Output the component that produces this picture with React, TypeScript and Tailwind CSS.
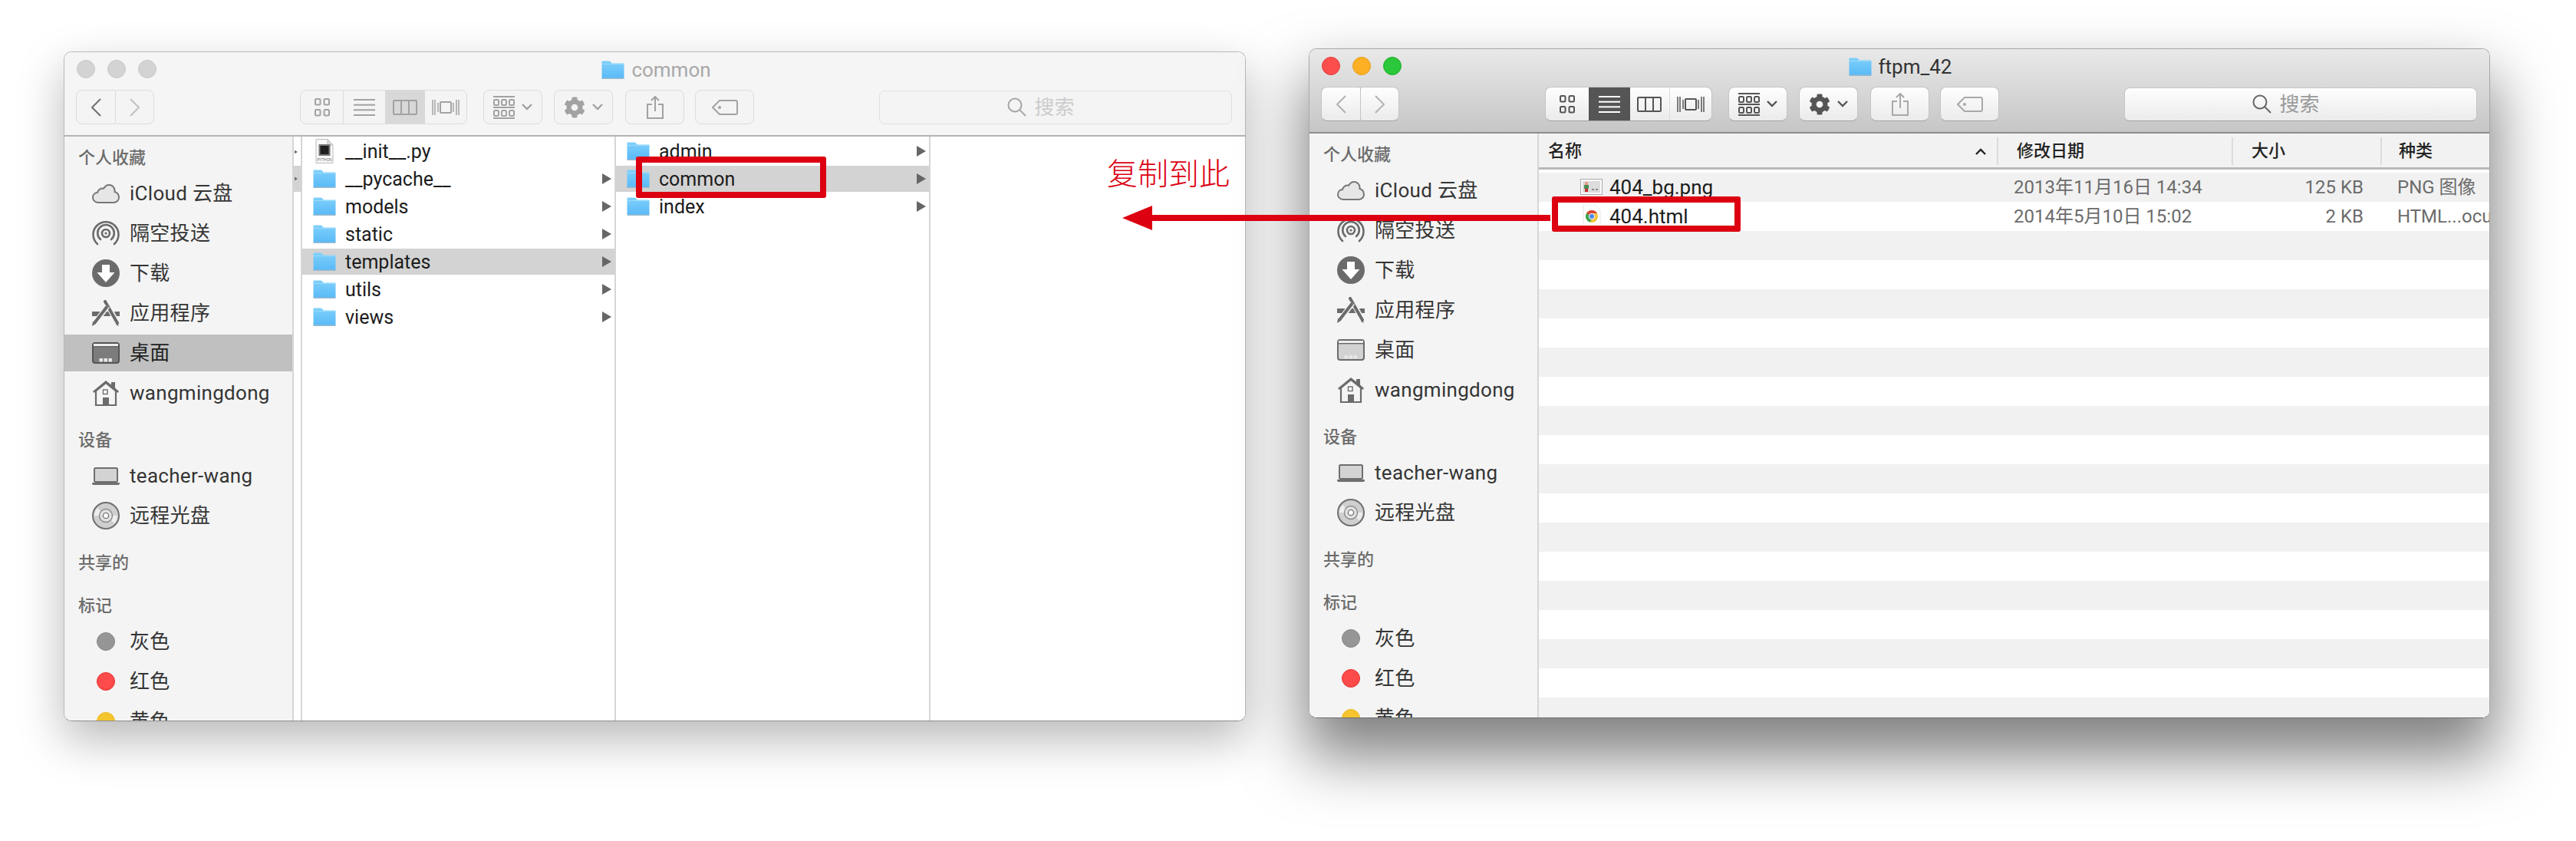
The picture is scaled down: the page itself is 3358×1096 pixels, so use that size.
import React from "react";
import { FaCog } from "react-icons/fa";

const Folder = ({ w = 30, h = 24 }: { w?: number; h?: number }) => (
  <svg width={w} height={h} viewBox="0 0 30 24" className="shrink-0">
    <defs>
      <linearGradient id="fg" x1="0" y1="0" x2="0" y2="1">
        <stop offset="0" stopColor="#7fd0fb" />
        <stop offset="1" stopColor="#58b9f7" />
      </linearGradient>
    </defs>
    <path d="M0.5 1.5 Q0.5 0.5 1.5 0.5 H10 Q11.5 0.5 12.5 2 L13.5 3.5 H28.5 Q29.5 3.5 29.5 4.5 V22.5 Q29.5 23.5 28.5 23.5 H1.5 Q0.5 23.5 0.5 22.5 Z" fill="url(#fg)" />
    <rect x="0.5" y="22.5" width="29" height="1.5" fill="#9ab9cd" />
    <rect x="0.5" y="4" width="29" height="1" fill="#9bdcfc" />
  </svg>
);

const Cloud = () => (
  <svg width="36" height="25" viewBox="0 0 36 25">
    <path d="M8 24C3.5 24 1 20.5 1 17.5 1 13.5 4 11.2 7 11 8 7 11.5 5 15 5.8 17 2.5 19.5 1 22 1 27 1 30 5 29.5 10 33 11 35 14 35 17.5 35 21 32 24 28 24Z" fill="#e6e6e6" stroke="#777" strokeWidth="2" />
  </svg>
);
const AirDrop = () => (
  <svg width="36" height="34" viewBox="0 0 36 34" fill="none" stroke="#6b6b6b" strokeWidth="2.6" strokeLinecap="round">
    <path d="M7 31A16.5 16.5 0 1 1 29 31" />
    <path d="M11 25A10.8 10.8 0 1 1 25 25" />
    <circle cx="18" cy="17" r="5" />
    <circle cx="18" cy="17" r="1.6" fill="#6b6b6b" stroke="none" />
  </svg>
);
const Download = () => (
  <svg width="36" height="36" viewBox="0 0 36 36">
    <circle cx="18" cy="18" r="18" fill="#6b6b6b" />
    <path d="M13 7H23V17H29.5L18 30 6.5 17H13Z" fill="#fff" />
  </svg>
);
const Apps = () => (
  <svg width="36" height="34" viewBox="0 0 36 34">
    <path d="M0 15H36V21H0Z" fill="#6b6b6b" />
    <path d="M18 1 33 31" stroke="#f4f4f4" strokeWidth="7" />
    <path d="M17 2 33 30" stroke="#6b6b6b" strokeWidth="4" strokeLinecap="round" />
    <path d="M33 30 35 34 31 32Z" fill="#6b6b6b" />
    <path d="M20 8 3 31" stroke="#f4f4f4" strokeWidth="7" />
    <path d="M20 8 3 30" stroke="#6b6b6b" strokeWidth="4" />
    <path d="M1 28 5 31 0 34Z" fill="#6b6b6b" />
  </svg>
);
const Desk = ({ sel }: { sel: boolean }) => (
  <svg width="36" height="28" viewBox="0 0 36 28">
    <rect x="1" y="1" width="34" height="26" rx="3" fill={sel ? "#7c7c7c" : "#d2d2d2"} stroke={sel ? "#555" : "#6b6b6b"} strokeWidth="2" />
    <rect x="2" y="2" width="32" height="3" fill="#eeeeee" />
    <rect x="2" y="5" width="32" height="1.4" fill="#666" />
    <rect x="9.5" y="21" width="4.5" height="4.5" fill="#e6e6e6" />
    <rect x="15.5" y="21" width="4.5" height="4.5" fill="#e6e6e6" />
    <rect x="21.5" y="21" width="4.5" height="4.5" fill="#e6e6e6" />
  </svg>
);
const Home = () => (
  <svg width="36" height="34" viewBox="0 0 36 34">
    <path d="M1 15 18 1 25 6.5V3H30V10.5L35 15 33.5 17 18 4.5 2.5 17Z" fill="#6b6b6b" />
    <path d="M5 14.5V33H31V14.5L18 4Z" fill="#f4f4f4" stroke="#6b6b6b" strokeWidth="2.2" />
    <rect x="14.5" y="13" width="5.5" height="5.5" fill="#fff" stroke="#6b6b6b" strokeWidth="1.4" />
    <rect x="14" y="23" width="8" height="10" fill="#6b6b6b" />
  </svg>
);
const Laptop = () => (
  <svg width="36" height="23" viewBox="0 0 36 23">
    <rect x="3" y="1" width="30" height="18" rx="1.5" fill="#d3d3d3" stroke="#6f6f6f" strokeWidth="2" />
    <path d="M0 20H36V21Q36 23 34 23H2Q0 23 0 21Z" fill="#6f6f6f" />
  </svg>
);
const Disc = () => (
  <svg width="36" height="36" viewBox="0 0 36 36">
    <circle cx="18" cy="18" r="17" fill="#cfcfcf" stroke="#707070" strokeWidth="2" />
    <path d="M7 8 13 14A7 7 0 0 0 11.5 18L3 18A15 15 0 0 1 7 8Z" fill="#eeeeee" />
    <path d="M29 28 23 22A7 7 0 0 0 24.5 18L33 18A15 15 0 0 1 29 28Z" fill="#eeeeee" />
    <circle cx="18" cy="18" r="8.5" fill="#e2e2e2" stroke="#8a8a8a" strokeWidth="1.4" />
    <circle cx="18" cy="18" r="3.6" fill="#fff" stroke="#777" strokeWidth="1.4" />
  </svg>
);
const Py = () => (
  <svg width="24" height="32" viewBox="0 0 24 32" className="shrink-0">
    <path d="M1 .5H16L23 8V31.5H1Z" fill="#f8f8f8" stroke="#bbb" />
    <path d="M16 .5V8H23Z" fill="#ddd" stroke="#bbb" />
    <rect x="4.5" y="7" width="15" height="15" fill="#777" />
    <rect x="6.5" y="9" width="11" height="11" fill="#1f1f1f" />
    <text x="12" y="29" fontSize="4.6" textAnchor="middle" fill="#666" fontFamily="Liberation Sans">PYTHON</text>
  </svg>
);
const Png = () => (
  <svg width="29" height="22" viewBox="0 0 29 22" className="shrink-0">
    <rect x="0.5" y="0.5" width="28" height="20" fill="#fbfbfb" stroke="#aaa" />
    <rect x="3" y="3" width="23" height="15" fill="#dcdcdc" />
    <rect x="6" y="4" width="4" height="4" fill="#e8a08a" />
    <rect x="5" y="8" width="6" height="5" fill="#4c8a50" />
    <rect x="6" y="13" width="4" height="4" fill="#c62b2b" />
    <rect x="15" y="13" width="3" height="2" fill="#888" />
    <rect x="20" y="13" width="3" height="2" fill="#888" />
  </svg>
);
const ChromeDoc = () => (
  <svg width="24" height="30" viewBox="0 0 24 30" className="shrink-0">
    <path d="M1 0H16L23 7V30H1Z" fill="#fff" stroke="#e6e6e6" />
    <circle cx="12" cy="15" r="8" fill="#f2c53a" />
    <path d="M12 7A8 8 0 0 1 19 11H12A4 4 0 0 0 8.4 13.2L5.2 10.8A8 8 0 0 1 12 7Z" fill="#db4437" />
    <path d="M5.2 10.8 8.4 13.2A4 4 0 0 0 12 19L9.5 22.6A8 8 0 0 1 5.2 10.8Z" fill="#3aa757" />
    <circle cx="12" cy="15" r="3.6" fill="#4a86e8" stroke="#fff" strokeWidth="1" />
  </svg>
);

const Arrow = ({ w = 12, h = 14 }: { w?: number; h?: number }) => (
  <svg width={w} height={h} viewBox="0 0 12 14"><path d="M0 0 12 7 0 14Z" fill="#666" /></svg>
);

const Btn = ({ active, className, children }: { active: boolean; className: string; children: React.ReactNode }) => (
  <div className={`flex items-center justify-center rounded-[8px] border h-[45px] ${active ? "bg-gradient-to-b from-[#fefefe] to-[#ebebeb] border-[#c4c4c4] border-b-[#a4a4a4]" : "bg-[#f4f4f4] border-[#dcdcdc]"} ${className}`}>
    {children}
  </div>
);

const ViewIcon = ({ kind, color }: { kind: number; color: string }) => {
  if (kind === 0)
    return (
      <svg width="20" height="24" viewBox="0 0 20 24" fill="none" stroke={color} strokeWidth="2">
        <rect x="1" y="1" width="6.5" height="7.5" rx="1.5" /><rect x="12.5" y="1" width="6.5" height="7.5" rx="1.5" />
        <rect x="1" y="15" width="6.5" height="7.5" rx="1.5" /><rect x="12.5" y="15" width="6.5" height="7.5" rx="1.5" />
      </svg>
    );
  if (kind === 1)
    return (
      <svg width="28" height="22" viewBox="0 0 28 22" fill={color}>
        <rect y="0" width="28" height="2" /><rect y="6.7" width="28" height="2" /><rect y="13.3" width="28" height="2" /><rect y="20" width="28" height="2" />
      </svg>
    );
  if (kind === 2)
    return (
      <svg width="32" height="20" viewBox="0 0 32 20" fill="none" stroke={color} strokeWidth="2">
        <rect x="1" y="1" width="30" height="18" rx="1" /><path d="M11 1V19M21 1V19" />
      </svg>
    );
  return (
    <svg width="36" height="22" viewBox="0 0 36 22" fill="none" stroke={color} strokeWidth="2">
      <rect x="11" y="4" width="14" height="14" rx="1" />
      <path d="M1 1V21M4 1V21M8 5V17M28 5V17M32 1V21M35 1V21" strokeWidth="1.5" />
    </svg>
  );
};

const Toolbar = ({ active, title, view }: { active: boolean; title: string; view: number }) => {
  const ic = active ? "#555555" : "#a2a2a2";
  const dim = active ? "#b2b2b2" : "#a2a2a2";
  const forward = active ? "#b2b2b2" : "#c0c0c0";
  return (
    <div className={`h-[110px] shrink-0 border-b-2 flex flex-col ${active ? "bg-gradient-to-b from-[#e9e9e9] to-[#c6c6c6] border-[#8d8d8d]" : "bg-[#f5f5f5] border-[#b4b4b4]"}`}>
      <div className="h-[49px] shrink-0 grid grid-cols-[1fr_auto_1fr] items-center pl-[16px]">
        <div className="flex gap-[16px] -mt-[5px]">
          <div className={`w-[24px] h-[24px] rounded-full border ${active ? "bg-[#fc4e4c] border-[#e0403e]" : "bg-[#d3d3d3] border-[#c8c8c8]"}`} />
          <div className={`w-[24px] h-[24px] rounded-full border ${active ? "bg-[#fdb024] border-[#e59c1c]" : "bg-[#d3d3d3] border-[#c8c8c8]"}`} />
          <div className={`w-[24px] h-[24px] rounded-full border ${active ? "bg-[#2ac83a] border-[#22ae30]" : "bg-[#d3d3d3] border-[#c8c8c8]"}`} />
        </div>
        <div className={`flex items-center gap-[9px] -mt-[4px] ${active ? "-ml-[14px]" : "-ml-[12px]"}`}>
          <Folder w={30} h={24} />
          <span className={`text-[26px] leading-none ${active ? "text-[#333333]" : "text-[#a8a8a8]"}`}>{title}</span>
        </div>
        <div />
      </div>
      <div className="flex items-center pl-[15px]">
        <div className="flex">
          <Btn active={active} className="w-[52px] rounded-r-[3px]">
            <svg width="14" height="24" viewBox="0 0 14 24" fill="none" stroke={active ? dim : "#6f6f6f"} strokeWidth="2"><path d="M13 1 2 12 13 23" /></svg>
          </Btn>
          <Btn active={active} className="w-[51px] rounded-l-[3px] -ml-px">
            <svg width="14" height="24" viewBox="0 0 14 24" fill="none" stroke={forward} strokeWidth="2"><path d="M1 1 12 12 1 23" /></svg>
          </Btn>
        </div>
        <div className={`ml-[190px] flex w-[218px] h-[45px] rounded-[8px] overflow-hidden border ${active ? "bg-gradient-to-b from-[#fefefe] to-[#ebebeb] border-[#c4c4c4] border-b-[#a4a4a4]" : "bg-[#f4f4f4] border-[#dcdcdc]"}`}>
          {[57, 54, 52, 55].map((w, i) => (
            <div key={i} style={{ width: w }} className={`flex items-center justify-center ${i === view ? (active ? "bg-[#555555]" : "bg-[#d8d8d8]") : ""} ${i < 3 && i !== view && i + 1 !== view ? "border-r border-[#dcdcdc]" : ""}`}>
              <ViewIcon kind={i} color={i === view && active ? "#ffffff" : ic} />
            </div>
          ))}
        </div>
        <Btn active={active} className="ml-[21px] w-[77px] gap-[9px]">
          <svg width="28" height="40" viewBox="0 0 28 40" fill="none" stroke={ic} strokeWidth="2">
            <path d="M0 6H28M0 20H28M0 34H28" />
            <rect x="1" y="10" width="6" height="7" rx="1.5" /><rect x="11" y="10" width="6" height="7" rx="1.5" /><rect x="21" y="10" width="6" height="7" rx="1.5" />
            <rect x="1" y="24" width="6" height="7" rx="1.5" /><rect x="11" y="24" width="6" height="7" rx="1.5" /><rect x="21" y="24" width="6" height="7" rx="1.5" />
          </svg>
          <svg width="14" height="9" viewBox="0 0 14 9" fill="none" stroke={ic} strokeWidth="2.4"><path d="M1 1 7 7 13 1" /></svg>
        </Btn>
        <Btn active={active} className="ml-[15px] w-[77px] gap-[9px]">
          <FaCog size={28} color={ic} />
          <svg width="14" height="9" viewBox="0 0 14 9" fill="none" stroke={ic} strokeWidth="2.4"><path d="M1 1 7 7 13 1" /></svg>
        </Btn>
        <Btn active={active} className="ml-[16px] w-[77px]">
          <svg width="22" height="30" viewBox="0 0 22 30" fill="none" stroke={active ? "#a8a8a8" : "#a2a2a2"} strokeWidth="2">
            <path d="M7 11H1V29H21V11H15M11 20V1M6 6 11 1 16 6" />
          </svg>
        </Btn>
        <Btn active={active} className="ml-[14px] w-[77px]">
          <svg width="34" height="20" viewBox="0 0 34 20" fill="none" stroke={active ? "#a8a8a8" : "#a2a2a2"} strokeWidth="2">
            <path d="M10 1H31Q33 1 33 3V17Q33 19 31 19H10L1 10Z" /><circle cx="10" cy="10" r="1" fill="#a2a2a2" />
          </svg>
        </Btn>
        <div className={`ml-[163px] w-[460px] h-[44px] rounded-[7px] border flex items-center justify-center gap-[10px] pr-[38px] ${active ? "bg-gradient-to-b from-[#fefefe] to-[#ebebeb] border-[#c4c4c4] border-b-[#a4a4a4]" : "bg-[#f4f4f4] border-[#e0e0e0]"}`}>
          <svg width="25" height="25" viewBox="0 0 25 25" fill="none" stroke={active ? "#666666" : "#a6a6a6"} strokeWidth="2"><circle cx="10" cy="10" r="8.5" /><path d="M16 16 24 24" /></svg>
          <span className={`text-[26px] leading-none ${active ? "text-[#9a9a9a]" : "text-[#cccccc]"}`}>搜索</span>
        </div>
      </div>
    </div>
  );
};

const SideHead = ({ children, className = "" }: { children: React.ReactNode; className?: string }) => (
  <div className={`h-[36px] flex items-center pl-[18px] text-[22px] leading-none font-medium text-[#6c6c6c] ${className}`}>{children}</div>
);
const SideItem = ({ icon, label, sel = false, className = "" }: { icon: React.ReactNode; label: string; sel?: boolean; className?: string }) => (
  <div className={`h-[52px] py-[2px] ${className}`}>
    <div className={`h-[48px] flex items-center pl-[36px] gap-[13px] ${sel ? "bg-[#c0c0c0]" : ""}`}>
      <div className="w-[36px] flex justify-center items-center shrink-0">{icon}</div>
      <span className={`text-[26px] leading-none tracking-[0.3px] whitespace-nowrap ${sel ? "text-[#1f1f1f]" : "text-[#353535]"}`}>{label}</span>
    </div>
  </div>
);
const Dot = ({ c }: { c: string }) => <div className={`w-[24px] h-[24px] rounded-full border ${c}`} />;

const Sidebar = ({ selDesk }: { selDesk: boolean }) => (
  <div className="w-[299px] shrink-0 bg-[#f4f4f4] border-r-2 border-[#d6d6d6] pt-[10px] overflow-hidden">
    <SideHead className="mb-[2px]">个人收藏</SideHead>
    <SideItem icon={<Cloud />} label="iCloud 云盘" />
    <SideItem icon={<AirDrop />} label="隔空投送" />
    <SideItem icon={<Download />} label="下载" />
    <SideItem icon={<Apps />} label="应用程序" />
    <SideItem icon={<Desk sel={selDesk} />} label="桌面" sel={selDesk} />
    <SideItem icon={<Home />} label="wangmingdong" />
    <SideHead className="mt-[18px] mb-[2px]">设备</SideHead>
    <SideItem icon={<Laptop />} label="teacher-wang" />
    <SideItem icon={<Disc />} label="远程光盘" />
    <SideHead className="mt-[18px]">共享的</SideHead>
    <SideHead className="mt-[20px] mb-[2px]">标记</SideHead>
    <SideItem icon={<Dot c="bg-[#969696] border-[#858585]" />} label="灰色" />
    <SideItem icon={<Dot c="bg-[#fd4a4a] border-[#e93232]" />} label="红色" />
    <SideItem icon={<Dot c="bg-[#f5c52f] border-[#eab71f]" />} label="黄色" />
  </div>
);

const ColRow = ({ icon, label, sel = false, arrow = true }: { icon: React.ReactNode; label: string; sel?: boolean; arrow?: boolean }) => (
  <div className="h-[36px] pb-[2px]">
    <div className={`h-[34px] flex items-center pl-[14px] pr-[4px] ${sel ? "bg-[#d3d3d3]" : ""}`}>
      <div className="w-[30px] flex justify-center shrink-0">{icon}</div>
      <span className="ml-[12px] text-[25px] leading-none text-[#1c1c1c] flex-1">{label}</span>
      {arrow && <Arrow />}
    </div>
  </div>
);

const ColumnView = () => (
  <div className="flex flex-1 bg-white min-w-0">
    <div className="w-[9px] shrink-0 pt-[2px]">
      <div className="h-[36px] flex items-center pl-[1px]"><Arrow w={4} h={10} /></div>
      <div className="h-[34px] flex items-center pl-[1px] bg-[#d3d3d3]"><Arrow w={4} h={10} /></div>
    </div>
    <div className="w-[411px] shrink-0 border-l-2 border-r-2 border-[#d6d6d6] pt-[2px]">
      <ColRow icon={<Py />} label="__init__.py" arrow={false} />
      <ColRow icon={<Folder />} label="__pycache__" />
      <ColRow icon={<Folder />} label="models" />
      <ColRow icon={<Folder />} label="static" />
      <ColRow icon={<Folder />} label="templates" sel />
      <ColRow icon={<Folder />} label="utils" />
      <ColRow icon={<Folder />} label="views" />
    </div>
    <div className="w-[410px] shrink-0 border-r-2 border-[#d6d6d6] pt-[2px]">
      <ColRow icon={<Folder />} label="admin" />
      <ColRow icon={<Folder />} label="common" sel />
      <ColRow icon={<Folder />} label="index" />
    </div>
    <div className="flex-1" />
  </div>
);

const ListRow = ({ icon, name, date, size, kind }: { icon?: React.ReactNode; name?: string; date?: string; size?: string; kind?: string }) => (
  <div className="h-[38px] shrink-0 flex items-center odd:bg-[#f1f1f1] even:bg-white text-[24px] leading-none whitespace-nowrap">
    <div className="w-[599px] shrink-0 pl-[54px] flex items-center">
      <div className="w-[29px] flex justify-center shrink-0">{icon}</div>
      <span className="ml-[9px] text-[26px] text-[#1c1c1c]">{name}</span>
    </div>
    <div className="w-[306px] shrink-0 pl-[20px] text-[#6c6c6c]">{date}</div>
    <div className="w-[194px] shrink-0 pr-[24px] text-right text-[#6c6c6c]">{size}</div>
    <div className="pl-[20px] text-[#6c6c6c]">{kind}</div>
  </div>
);

const HeadCell = ({ w, children }: { w: string; children: React.ReactNode }) => (
  <div className={`${w} shrink-0 h-[36px] flex items-center border-r-2 border-[#dcdcdc] pl-[24px]`}>
    <span className="text-[22px] leading-none font-medium text-[#222222]">{children}</span>
  </div>
);

const ListView = () => (
  <div className="flex-1 min-w-0 bg-white flex flex-col overflow-hidden">
    <div className="h-[47px] shrink-0 bg-[#f2f2f2] border-b-[3px] border-[#b9b9b9] flex items-start pt-[5px] overflow-hidden">
      <div className="w-[599px] shrink-0 h-[36px] flex items-center justify-between border-r-2 border-[#dcdcdc] pl-[12px] pr-[14px]">
        <span className="text-[22px] leading-none font-medium text-[#222222]">名称</span>
        <svg width="14" height="9" viewBox="0 0 14 9" fill="none" stroke="#222" strokeWidth="2.4"><path d="M1 8 7 2 13 8" /></svg>
      </div>
      <HeadCell w="w-[306px]">修改日期</HeadCell>
      <HeadCell w="w-[194px]">大小</HeadCell>
      <div className="pl-[22px] h-[36px] flex items-center text-[22px] leading-none font-medium text-[#222222]">种类</div>
    </div>
    <div className="flex-1 pt-[4px] flex flex-col overflow-hidden">
      <ListRow icon={<Png />} name="404_bg.png" date="2013年11月16日 14:34" size="125 KB" kind="PNG 图像" />
      <ListRow icon={<ChromeDoc />} name="404.html" date="2014年5月10日 15:02" size="2 KB" kind="HTML...ocument" />
      {Array.from({ length: 18 }).map((_, i) => <ListRow key={i} />)}
    </div>
  </div>
);

export default function App() {
  return (
    <div className="relative w-[3358px] h-[1096px] bg-white overflow-hidden flex items-start font-[Roboto,'Noto_Sans_CJK_SC',sans-serif]">
      <div className="ml-[83px] mt-[67px] w-[1541px] h-[873px] shrink-0 flex flex-col rounded-[10px] overflow-hidden border border-[#b8b8b8] border-b-[#8f8f8f] shadow-[0_24px_60px_rgba(0,0,0,0.28)]">
        <Toolbar active={false} title="common" view={2} />
        <div className="flex flex-1 min-h-0">
          <Sidebar selDesk />
          <ColumnView />
        </div>
      </div>
      <div className="ml-[82px] mt-[63px] w-[1540px] h-[873px] shrink-0 flex flex-col rounded-[10px] overflow-hidden border border-[#a8a8a8] border-b-[#6e6e6e] shadow-[0_44px_80px_6px_rgba(0,0,0,0.5)]">
        <Toolbar active title="ftpm_42" view={1} />
        <div className="flex flex-1 min-h-0">
          <Sidebar selDesk={false} />
          <ListView />
        </div>
      </div>

      <div className="absolute left-[829px] top-[204px] w-[248px] h-[54px] border-[8px] border-[#dc0011] rounded-[3px]" />
      <div className="absolute left-[2023px] top-[256px] w-[246px] h-[46px] border-[8px] border-[#dc0011] rounded-[3px]" />
      <div className="absolute left-[1443px] top-[204px] text-[40px] leading-[40px] text-[#dc0011] font-['Noto_Sans_CJK_SC',sans-serif] font-light whitespace-nowrap">复制到此</div>
      <svg className="absolute left-[1463px] top-[268px]" width="558" height="32" viewBox="0 0 558 32">
        <path d="M0 16 39 0V12H558V20H39V32Z" fill="#dc0011" />
      </svg>
    </div>
  );
}
